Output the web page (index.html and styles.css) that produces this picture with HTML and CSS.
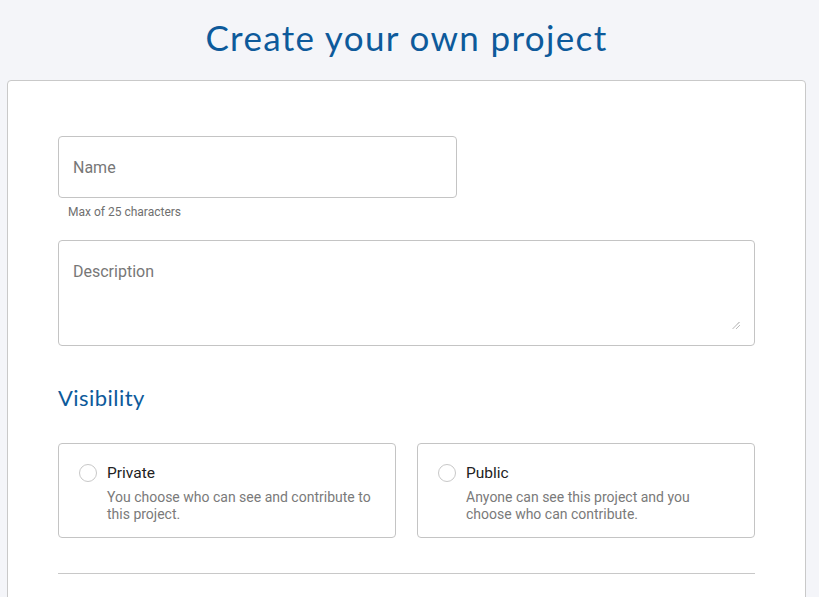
FILE: index.html
```html
<!DOCTYPE html>
<html>
<head>
<meta charset="utf-8">
<link rel="stylesheet" href="styles.css">
</head>
<body>
<div class="page">
  <h1 class="title">Create your own project</h1>
  <div class="card">
    <div class="field name-field">
      <div class="input">Name</div>
      <div class="helper">Max of 25 characters</div>
    </div>
    <div class="textarea">
      <span>Description</span>
      <svg class="grip" width="8" height="8" viewBox="0 0 8 8"><path d="M1 7.5L7.5 1M4.5 7.5L7.5 4.5" stroke="#555" stroke-width="0.8" stroke-dasharray="1 0.6" fill="none"/></svg>
    </div>
    <h2 class="section">Visibility</h2>
    <div class="options">
      <div class="option">
        <span class="radio"></span>
        <div class="opt-text">
          <div class="opt-title">Private</div>
          <div class="opt-desc">You choose who can see and contribute to this project.</div>
        </div>
      </div>
      <div class="option">
        <span class="radio"></span>
        <div class="opt-text">
          <div class="opt-title">Public</div>
          <div class="opt-desc">Anyone can see this project and you choose who can contribute.</div>
        </div>
      </div>
    </div>
    <hr class="divider">
  </div>
</div>
</body>
</html>
```
FILE: styles.css
```css
html, body { margin: 0; padding: 0; background: #f4f5f9; }
body { font-family: Roboto, "Liberation Sans", sans-serif; overflow: hidden; }
.page { width: 799px; margin-left: 7px; }
.title {
  margin: 0;
  height: 80px;
  box-sizing: border-box;
  padding-top: 13px;
  text-align: center;
  font-family: Lato, "Open Sans", sans-serif;
  font-weight: 400;
  font-size: 35px;
  letter-spacing: 1.35px;
  line-height: 48px;
  color: #0d5a9b;
}
.card {
  background: #fff;
  border: 1px solid #c9c9c9;
  border-radius: 4px;
  padding: 55px 50px 40px 50px;
  min-height: 600px;
}
.input {
  width: 399px;
  height: 62px;
  box-sizing: border-box;
  border: 1px solid #c4c4c4;
  border-radius: 4px;
  padding: 0 14px;
  display: flex;
  align-items: center;
  font-size: 16px;
  color: #777;
}
.helper {
  margin: 6px 0 0 10px;
  font-size: 12px;
  line-height: 16px;
  color: #6f6f6f;
}
.textarea {
  position: relative;
  margin-top: 20px;
  height: 106px;
  box-sizing: border-box;
  border: 1px solid #c4c4c4;
  border-radius: 4px;
  padding: 21px 14px;
  font-size: 16px;
  line-height: 20px;
  color: #777;
}
.grip { position: absolute; right: 14px; bottom: 16px; }
.section {
  margin: 38px 0 0 0;
  font-family: Lato, "Open Sans", sans-serif;
  font-weight: 400;
  font-size: 22px;
  letter-spacing: 0.45px;
  line-height: 28px;
  color: #0d5a9b;
}
.options {
  margin-top: 31px;
  display: grid;
  grid-template-columns: 1fr 1fr;
  gap: 21px;
}
.option {
  height: 95px;
  box-sizing: border-box;
  border: 1px solid #c4c4c4;
  border-radius: 4px;
  padding: 20px 20px 0 20px;
  display: flex;
  gap: 10px;
}
.radio {
  flex: none;
  width: 18px;
  height: 18px;
  box-sizing: border-box;
  border: 1px solid #c8c8c8;
  border-radius: 50%;
}
.opt-title { font-size: 15.5px; line-height: 18px; color: #222; }
.opt-desc { margin-top: 7px; font-size: 14px; line-height: 17px; color: #7a7a7a; }
.divider {
  margin: 35px 0 0 0;
  border: none;
  border-top: 1px solid #c8c8c8;
}
```
